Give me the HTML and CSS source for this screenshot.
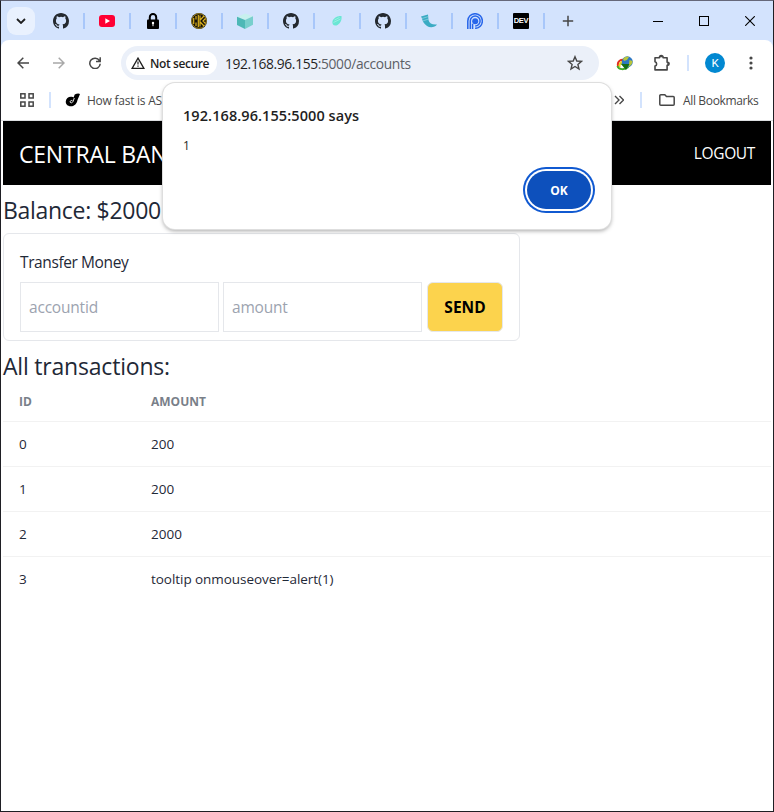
FILE: index.html
```html
<!DOCTYPE html>
<html lang="en">
<head>
<meta charset="utf-8">
<title>Central Bank</title>
<link rel="stylesheet" href="styles.css">
</head>
<body>
<svg class="defs" width="0" height="0">
  <symbol id="github" viewBox="0 0 16 16"><path fill="#24292f" d="M8 0C3.58 0 0 3.58 0 8c0 3.54 2.29 6.53 5.47 7.59.4.07.55-.17.55-.38 0-.19-.01-.82-.01-1.49-2.01.37-2.53-.49-2.69-.94-.09-.23-.48-.94-.82-1.13-.28-.15-.68-.52-.01-.53.63-.01 1.08.58 1.23.82.72 1.21 1.87.87 2.33.66.07-.52.28-.87.51-1.07-1.78-.2-3.64-.89-3.64-3.95 0-.87.31-1.59.82-2.15-.08-.2-.36-1.02.08-2.12 0 0 .67-.21 2.2.82a7.6 7.6 0 0 1 4 0c1.53-1.04 2.2-.82 2.2-.82.44 1.1.16 1.92.08 2.12.51.56.82 1.27.82 2.15 0 3.07-1.87 3.75-3.65 3.95.29.25.54.73.54 1.48 0 1.07-.01 1.93-.01 2.2 0 .21.15.46.55.38A8 8 0 0 0 16 8c0-4.42-3.58-8-8-8z"/></symbol>
</svg>
<div class="window">
  <header class="tabs">
    <button class="tab-search"><svg width="10" height="6" viewBox="0 0 10 6"><path d="M1 1l4 4 4-4" fill="none" stroke="#1f1f1f" stroke-width="1.8"/></svg></button>
    <div class="tab first"><svg width="16" height="16"><use href="#github"/></svg></div>
    <div class="tab"><svg width="16" height="16"><rect y="2" width="16" height="12" rx="3" fill="#ff0033"/><path d="M6.300 5.300v5.400L11 8z" fill="#fff"/></svg></div>
    <div class="tab"><svg width="16" height="16"><path d="M4.800 8V4.200a3.200 3.200 0 0 1 6.400 0V8" fill="none" stroke="#000" stroke-width="2"/><rect x="2" y="6.500" width="12" height="9.500" rx="1" fill="#000"/><circle cx="8" cy="10" r="1.200" fill="#fff"/><path d="M8 10v3.200" stroke="#fff"/></svg></div>
    <div class="tab"><svg width="16" height="16"><circle cx="8" cy="8" r="8" fill="#15130d"/><g fill="none" stroke="#e0b51d" stroke-width="1.200"><circle cx="8" cy="8" r="7.300" stroke-width=".7"/><path d="M2.700 5v6M5 3v3.500M5 9.500V13M7.300 2v12M13 3L9 7.200V2.500M13 13L9 8.800v4.700M14.500 5.500L12 8l2.500 2.500"/></g></svg></div>
    <div class="tab"><svg width="16" height="16"><path d="M0 3.700L8.300.5 16 3.200 8 7z" fill="#c8f0ee"/><path d="M0 3.700L8 7v9l-8-4z" fill="#4db8b6"/><path d="M16 3.200L8 7v9l8-4.300z" fill="#78cfcc"/></svg></div>
    <div class="tab"><svg width="16" height="16"><use href="#github"/></svg></div>
    <div class="tab"><svg width="16" height="16"><path d="M3.500 8C5 4 10 2.800 12.500 3c.5 4-1 7.500-5 9.500C4 13 3 11 3.500 8z" fill="#6ae6d4"/><path d="M4.500 9.500l7-3.500M5.500 7l5-2.500" stroke="#a4f0e3" stroke-width=".8"/></svg></div>
    <div class="tab"><svg width="16" height="16"><use href="#github"/></svg></div>
    <div class="tab"><svg width="16" height="16"><path d="M0 3.500l7-2 .5 5.500c.8 3.500 4 5 8.500 4.500-2 3-7 3.500-10 1.500C3 11 1.500 8 .8 5z" fill="#3babc3"/><path d="M1 5.500l6.500-2M1.600 8l6-2" stroke="#a5dce8" stroke-width=".6"/></svg></div>
    <div class="tab"><svg width="16" height="16"><g fill="none" stroke="#2866ea" stroke-width="1.500"><path d="M.8 16V8a7.300 7.300 0 1 1 7.300 7.300"/><path d="M3.300 16V8a4.900 4.900 0 1 1 4.900 4.900"/><path d="M5.600 16v-5.300"/></g><circle cx="8.200" cy="8.200" r="3" fill="#2866ea"/></svg></div>
    <div class="tab"><span class="dev">DEV</span></div>
    <div class="new-tab"><svg width="12" height="12"><path d="M6 .8v10.400M.8 6h10.400" stroke="#474747" stroke-width="1.500"/></svg></div>
    <div class="controls">
      <svg width="10" height="10" shape-rendering="crispEdges"><path d="M0 5.500h10" stroke="#000"/></svg>
      <svg width="10" height="10" shape-rendering="crispEdges"><rect x=".5" y=".5" width="9" height="9" fill="none" stroke="#000"/></svg>
      <svg width="10" height="10"><path d="M.2.200l9.600 9.600M9.800.2L.2 9.800" stroke="#000" stroke-width="1.100"/></svg>
    </div>
  </header>

  <div class="chrome">
    <div class="toolbar">
      <svg class="back" width="12" height="12" fill="none" stroke="#474747" stroke-width="1.500"><path d="M12 6H1M6.300.7L1 6l5.300 5.300"/></svg>
      <svg class="fwd" width="12" height="12" fill="none" stroke="#a8a8a8" stroke-width="1.500"><path d="M0 6h11M5.700.7L11 6l-5.300 5.300"/></svg>
      <svg class="reload" width="12" height="12" viewBox="0 0 12 12" fill="none" stroke="#474747" stroke-width="1.500"><path d="M10.400 3.600A5.200 5.200 0 1 0 11.200 6.700M11.200.2v4.200H7"/></svg>
      <div class="omnibox">
        <span class="chip"><svg width="14" height="12" viewBox="0 0 14 12"><path d="M7 1.100L12.900 11.300H1.100z" fill="none" stroke="#1f1f1f" stroke-width="1.300"/><path d="M7 4.500v3M7 8.500v1.300" stroke="#1f1f1f" stroke-width="1.200"/></svg><b>Not secure</b></span>
        <span class="url">192.168.96.155<i>:5000/accounts</i></span>
        <svg class="star" width="16" height="16" viewBox="0 0 16 16"><path d="M8 1.700l1.800 4.300 4.700.4-3.600 3 1.100 4.600L8 11.500 4 14l1.100-4.600-3.600-3 4.700-.4z" fill="none" stroke="#474747" stroke-width="1.400"/></svg>
      </div>
      <svg class="idm" width="18" height="16" viewBox="0 0 18 16"><g fill="none" stroke-width="2"><path d="M2 11C1 6 5 4 9 5" stroke="#e22f21"/><path d="M3.500 12C3 8 6 6 9 7" stroke="#f5d21f"/><path d="M1.500 11c1 4 7 4 11 1" stroke="#43a928"/></g><circle cx="11.300" cy="6.800" r="5.500" fill="#2e78c4"/><path d="M7 4c2-3 5-3 6-2l-2 3-3 1zM13.500 5l3 1c0 3-2 5-4 6z" fill="#b9c53a"/><path d="M4.500 8.500l4 .5 5 0-3.500 6z" fill="#176e19"/></svg>
      <svg class="puzzle" width="18" height="18" viewBox="0 0 18 18"><path d="M2 3.700h4.500v-.4a1.800 1.800 0 0 1 3.600 0v.4h4v4.500h.4a1.500 1.500 0 0 1 0 3.200h-.4v4.500H2v-3.800a2.300 2.300 0 0 0 0-4.400z" fill="none" stroke="#474747" stroke-width="1.600" stroke-linejoin="round"/><path d="M6.600 3.300a1.700 1.700 0 0 1 3.400 0zM14.300 8.200a1.600 1.600 0 0 1 0 3.200z" fill="#474747"/></svg>
      <span class="sep tool-sep"></span>
      <span class="avatar">K</span>
      <svg class="dots" width="4" height="16" fill="#474747"><circle cx="2" cy="3" r="1.600"/><circle cx="2" cy="8" r="1.600"/><circle cx="2" cy="13" r="1.600"/></svg>
    </div>
    <div class="bookmarks">
      <svg class="apps" width="14" height="14" fill="none" stroke="#474747" stroke-width="1.500"><rect x=".8" y=".8" width="4.200" height="4.200"/><rect x="9" y=".8" width="4.200" height="4.200"/><rect x=".8" y="9" width="4.200" height="4.200"/><rect x="9" y="9" width="4.200" height="4.200"/></svg>
      <span class="sep apps-sep"></span>
      <svg class="site" width="16" height="14" viewBox="0 0 16 14"><path d="M9.700 1.500C12 .3 14 .2 15 1l-2.500 6c-.8 4-3.300 6.300-6.700 6.300C2.500 13.300.5 11 .8 8.300 1 5.500 3.500 3.400 6.500 3.700c1 .1 1.600.3 2.100.7z" fill="#000"/><path d="M9.300 5L8 8.500c-.4.900-1.200 1.400-2 1.300-1.300-.2-1.100-2 .2-2.300l1.200-.1" fill="none" stroke="#fff" stroke-width=".9"/></svg>
      <span class="mark">How fast is AS</span>
      <svg class="more" width="10" height="10" fill="none" stroke="#474747" stroke-width="1.400"><path d="M1 1l4 4-4 4M5.500 1l4 4-4 4"/></svg>
      <span class="sep all-sep"></span>
      <svg class="folder" width="16" height="12"><path d="M.8 10.200V1.800Q.8.800 1.800.8h4l1.700 1.800h6.700q1 0 1 1v6.600q0 1-1 1H1.800q-1 0-1-1z" fill="none" stroke="#474747" stroke-width="1.500"/></svg>
      <span class="all">All Bookmarks</span>
    </div>
  </div>

  <main class="page">
    <nav class="nav"><span class="brand">CENTRAL BANK</span><a class="logout">LOGOUT</a></nav>
    <h2 class="heading balance">Balance: $2000</h2>
    <form class="card">
      <label class="label">Transfer Money</label>
      <div class="fields">
        <input class="field" placeholder="accountid">
        <input class="field" placeholder="amount">
        <button type="button" class="send">SEND</button>
      </div>
    </form>
    <h2 class="heading all-tx">All transactions:</h2>
    <table class="tx">
      <thead><tr><th class="id">ID</th><th>AMOUNT</th></tr></thead>
      <tbody>
        <tr><td>0</td><td>200</td></tr>
        <tr><td>1</td><td>200</td></tr>
        <tr><td>2</td><td>2000</td></tr>
        <tr><td>3</td><td class="long">tooltip onmouseover=alert(1)</td></tr>
      </tbody>
    </table>
  </main>

  <div class="dialog">
    <div class="dialog-title">192.168.96.155:5000 says</div>
    <div class="dialog-text">1</div>
    <button class="ok">OK</button>
  </div>
</div>
</body>
</html>
```

FILE: styles.css
```css
* { box-sizing: border-box; }
body { margin: 0; font-family: "Open Sans", "Noto Sans", sans-serif; color: #1f2937; }
svg { display: block; flex: none; }
.defs { position: absolute; }
button { font-family: inherit; border: 0; padding: 0; }
span { white-space: nowrap; }

.window { position: relative; width: 774px; height: 812px; overflow: hidden; border: 1px solid #1f1f24; border-top-color: #65687a; background: #d3e3fd; }

.tabs { display: flex; align-items: center; height: 39px; }
.tab-search { width: 28px; height: 28px; margin-left: 6px; border-radius: 9px; background: #e9f1fe; display: flex; align-items: center; justify-content: center; }
.tab { width: 46px; height: 16px; display: flex; justify-content: center; border-right: 2px solid #a8c7fa; }
.tab.first { width: 50px; padding-left: 4px; }
.dev { width: 16px; height: 16px; border-radius: 1px; background: #000; color: #fff; font: bold 7.5px/16px "Liberation Sans", sans-serif; text-align: center; letter-spacing: -.3px; }
.new-tab { margin-left: 17px; }
.controls { display: flex; gap: 36px; margin-left: auto; margin-right: 18px; }

.chrome { height: 81px; background: #fff; border-radius: 8px 8px 0 0; border-bottom: 1px solid #dcdee0; }
.toolbar { display: flex; align-items: center; height: 40px; padding: 6px 0 0; }
.back { margin-left: 16px; }
.fwd { margin-left: 24px; }
.reload { margin-left: 24px; }
.omnibox { display: flex; align-items: center; width: 478px; height: 34px; margin-left: 20px; padding: 0 16px 0 5px; border-radius: 17px; background: #ebf0f9; }
.chip { display: flex; align-items: center; gap: 5px; width: 91px; height: 24px; padding-left: 5px; border-radius: 12px; background: #fff; color: #1f1f1f; }
.chip b { font-size: 12px; font-weight: 600; letter-spacing: -.4px; }
.url { margin-left: 8px; font-size: 13.800px; color: #1f1f1f; letter-spacing: -.35px; }
.url i { font-style: normal; color: #5c5f66; }
.star { margin-left: auto; }
.idm { margin-left: 17px; }
.puzzle { margin-left: 19px; }
.sep { width: 2px; height: 16px; background: #d3e3fd; }
.tool-sep { margin-left: 16px; }
.avatar { width: 20px; height: 20px; margin-left: 16px; border-radius: 50%; background: #0288d1; color: #fff; font: 11.500px/20px Roboto, sans-serif; text-align: center; }
.dots { margin-left: 24px; }
.bookmarks { display: flex; align-items: center; height: 40px; font-size: 12px; color: #474747; }
.apps { margin-left: 19px; }
.apps-sep { margin-left: 15px; }
.site { margin-left: 14px; }
.mark { width: 521px; margin-left: 6px; letter-spacing: -.25px; }
.more { margin-left: 6px; }
.all-sep { margin-left: 16px; }
.folder { margin-left: 17px; }
.all { margin-left: 8px; letter-spacing: -.35px; }

.page { height: 690px; background: #fff; padding: 0 2px; }
.nav { display: flex; align-items: center; justify-content: space-between; height: 64px; padding: 0 16px; background: #000; color: #fff; }
.brand { padding-top: 2px; font-size: 23px; letter-spacing: -.2px; }
.logout { font-size: 15.500px; letter-spacing: -.35px; }
.heading { margin: 0; font-size: 23px; line-height: 32px; font-weight: 400; letter-spacing: -.25px; }
.balance { margin-top: 9px; letter-spacing: -.3px; }
.card { width: 517px; height: 108px; margin-top: 7px; padding: 16px; border: 1px solid #e5e7eb; border-radius: 6px; }
.label { display: block; font-size: 15.500px; line-height: 24px; letter-spacing: -.4px; }
.fields { display: flex; margin-top: 8px; }
.field { width: 199px; height: 50px; margin-right: 4px; padding: 0 8px; border: 1px solid #e5e7eb; font: 15.500px "Open Sans", sans-serif; letter-spacing: -.2px; background: #fff; }
.field::placeholder { color: #9ca3af; opacity: 1; }
.send { width: 76px; height: 50px; margin-left: 1px; border: 1px solid #e5e7eb; border-radius: 6px; background: #fcd34d; color: #000; font-size: 15.500px; font-weight: 700; }
.all-tx { margin-top: 9px; letter-spacing: -.2px; }
.tx { width: 768px; border-collapse: collapse; table-layout: fixed; }
.tx th { height: 39px; padding: 0 16px; font-size: 12px; font-weight: 700; text-align: left; color: #797f89; }
.tx .id { width: 132px; }
.tx td { height: 45px; padding: 0 16px; border-top: 1px solid #f2f2f2; font-size: 13.500px; }
.tx .long { letter-spacing: -.05px; }

.dialog { position: absolute; left: 162px; top: 82px; width: 448px; height: 146px; padding: 22px 20px; border-radius: 12px; background: #fff; box-shadow: 0 0 0 1px #dedede, 0 2px 4px rgba(0,0,0,.35); color: #1f1f1f; }
.dialog-title { font-size: 14.500px; line-height: 22px; font-weight: 600; letter-spacing: .08px; }
.dialog-text { margin-top: 9px; font-size: 12px; line-height: 20px; }
.ok { display: block; width: 64px; height: 38px; margin: 15px 0 0 344px; border-radius: 19px; background: #0d50bc; color: #fff; font-size: 12px; font-weight: 700; box-shadow: 0 0 0 2px #fff, 0 0 0 4px #1059d1; }
```
